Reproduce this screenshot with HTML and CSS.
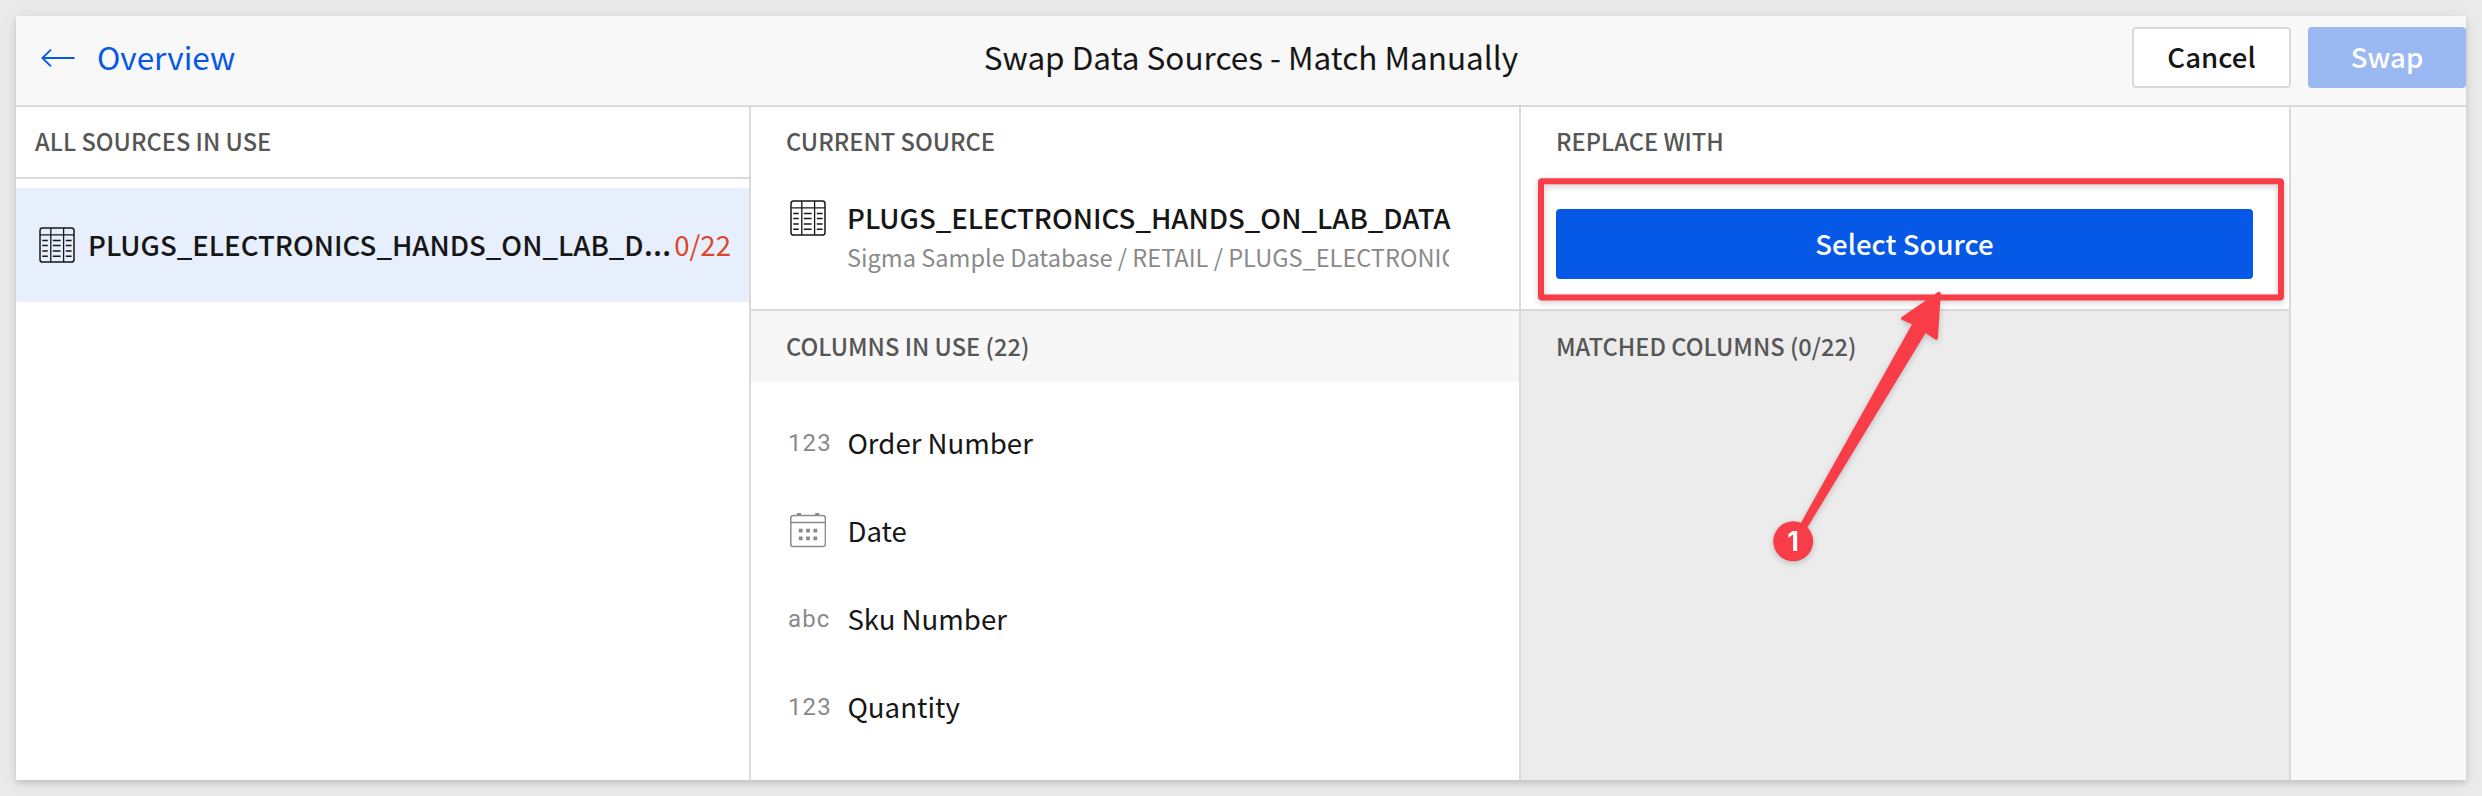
FILE: index.html
```html
<!DOCTYPE html>
<html lang="en">
<head>
<meta charset="utf-8">
<title>Swap Data Sources</title>
<link rel="stylesheet" href="styles.css">
</head>
<body>
<svg class="defs" aria-hidden="true">
  <symbol id="table" viewBox="0 0 36 36">
    <rect x="1" y="1" width="34" height="34" rx="2.6" stroke-width="1.5"/>
    <path d="M1 7.8H35M11.8 1V35M24.6 1V35" stroke-width="1.3"/>
    <path d="M3.3 13.4H8.8M13.8 13.4H21.6M26.8 13.4H32.6M3.3 18.6H8.8M13.8 18.6H21.6M26.8 18.6H32.6M3.3 24H8.8M13.8 24H21.6M26.8 24H32.6M3.3 29.3H8.8M13.8 29.3H21.6M26.8 29.3H32.6" stroke-width="1.5"/>
  </symbol>
</svg>
<main class="panel">
  <header class="topbar">
    <a class="back">
      <svg class="back-arrow" viewBox="0 0 34 20"><path d="M1.4 10H33.5M10 1.6L1.4 10L10 18.4"/></svg>
      <span>Overview</span>
    </a>
    <h1 class="title">Swap Data Sources - Match Manually</h1>
    <div class="actions">
      <button class="btn btn-cancel">Cancel</button>
      <button class="btn btn-swap">Swap</button>
    </div>
  </header>
  <div class="columns">
    <section class="col sources">
      <h2 class="heading ruled">ALL SOURCES IN USE</h2>
      <div class="source-row">
        <svg class="table-icon"><use href="#table"/></svg>
        <span class="source-name">PLUGS_ELECTRONICS_HANDS_ON_LAB_D<span class="ellipsis">…</span></span>
        <span class="count">0/22</span>
      </div>
    </section>
    <section class="col current">
      <div class="upper">
        <h2 class="heading">CURRENT SOURCE</h2>
        <div class="source-card">
          <svg class="table-icon"><use href="#table"/></svg>
          <div class="source-text">
            <div class="source-title">PLUGS_ELECTRONICS_HANDS_ON_LAB_DATA</div>
            <div class="source-path">Sigma Sample Database / RETAIL / PLUGS_ELECTRONIC</div>
          </div>
        </div>
      </div>
      <h2 class="heading lower shaded">COLUMNS IN USE (22)</h2>
      <ul class="fields">
        <li><span class="type">123</span><span>Order Number</span></li>
        <li><span class="type"><svg class="calendar" viewBox="0 0 36 36"><rect x=".8" y="3.5" width="34.6" height="31" rx="2.6"/><path d="M1 10.6H35"/><path class="solid" d="M7 1h4v3h-4zM25.2 1h4v3h-4zM8.8 16.8h3.8v3.8h-3.8zM16.1 16.8h3.8v3.8h-3.8zM23.4 16.8h3.8v3.8h-3.8zM8.8 24.4h3.8v3.8h-3.8zM16.1 24.4h3.8v3.8h-3.8zM23.4 24.4h3.8v3.8h-3.8z"/></svg></span><span>Date</span></li>
        <li><span class="type">abc</span><span>Sku Number</span></li>
        <li><span class="type">123</span><span>Quantity</span></li>
      </ul>
    </section>
    <section class="col replace">
      <div class="upper">
        <h2 class="heading">REPLACE WITH</h2>
        <button class="select-source">Select Source</button>
      </div>
      <h2 class="heading lower">MATCHED COLUMNS (0/22)</h2>
    </section>
  </div>
</main>
<svg class="annotation" viewBox="0 0 2482 796">
  <rect x="1541" y="181.2" width="740" height="116.3" rx="1"/>
  <path d="M1939 293.5L1902.8 318.4L1914.5 323.3L1802.8 523L1806.2 526L1925 330.6L1936.2 338Z"/>
  <circle cx="1793.2" cy="541.3" r="20"/>
  <text x="1793" y="550.5">1</text>
</svg>
</body>
</html>
```
FILE: styles.css
```css
* { box-sizing: border-box; }

body {
  margin: 0;
  height: 796px;
  padding: 16px;
  overflow: hidden;
  background: #eaeaea;
  color: #161616;
  font: 400 27.6px/40px "Noto Sans CJK SC", "Noto Sans", sans-serif;
}

h1, h2, ul { margin: 0; padding: 0; font-weight: 400; }
button { font: inherit; }
.defs { position: absolute; width: 0; height: 0; }

.panel {
  display: flex;
  flex-direction: column;
  width: 2450px;
  height: 764px;
  background: #f8f8f8;
  box-shadow: 0 3px 6px rgba(0, 0, 0, .14), 0 2px 18px rgba(0, 0, 0, .06);
}

/* Top bar */
.topbar {
  display: grid;
  grid-template-columns: 967.7px auto 1fr;
  align-items: start;
  height: 91px;
  border-bottom: 2px solid #dadada;
}
.back, .title { margin-top: 16px; font-size: 31.5px; line-height: 48px; }
.back { display: flex; align-items: center; gap: 22px; padding-left: 25px; color: #0658e6; }
.back-arrow { width: 34px; height: 20px; margin-top: 4px; fill: none; stroke: #0658e6; stroke-width: 1.9; }
.actions { display: flex; justify-content: flex-end; gap: 17px; margin-top: 11px; }
.btn { height: 61px; border: 2px solid #dadada; border-radius: 4px; padding: 0 0 3px; font-weight: 500; }
.btn-cancel { width: 159px; background: #fff; color: #161616; }
.btn-swap { width: 158px; border-color: #9ab8f1; background: #9ab8f1; color: #fff; }

/* Columns */
.columns { display: flex; flex: 1; }
.col { border-right: 2px solid #dadada; background: #fff; }
.sources { width: 735px; }
.current, .replace { width: 770px; }
.replace { background: #ececec; }

.heading {
  height: 71px;
  padding-left: 35px;
  color: #565656;
  font-size: 23.65px;
  font-weight: 500;
  line-height: 69px;
}
.ruled { height: 72px; padding-left: 19px; border-bottom: 2px solid #dadada; }
.lower { line-height: 71px; }
.shaded { background: #f7f7f7; }
.upper { height: 204px; border-bottom: 2px solid #dadada; background: #fff; }

.table-icon { flex: none; width: 36px; height: 36px; fill: none; stroke: #161616; }

.source-row {
  display: flex;
  align-items: center;
  height: 114px;
  margin-top: 9px;
  padding: 0 18px 0 23px;
  background: #e7eefc;
}
.source-name { margin: -2px 0 0 13px; font-weight: 500; white-space: nowrap; }
.ellipsis { font: 500 34px/0 "Noto Sans", sans-serif; }
.count { margin: -2px 0 0 auto; color: #da472b; }

.source-card { display: flex; padding: 22px 70px 0 39px; }
.source-text { min-width: 0; margin-left: 21px; }
.source-title { margin-top: -3px; font-weight: 500; white-space: nowrap; }
.source-path { overflow: hidden; color: #8a8a8a; font-size: 23.6px; white-space: nowrap; }

.fields { padding-top: 16px; list-style: none; }
.fields li { display: flex; height: 88px; padding: 0 0 0 37px; line-height: 88px; }
.type { width: 59.4px; color: #8a8a8a; font: 400 24px/90px Roboto, sans-serif; letter-spacing: 1.1px; }
.calendar { display: block; width: 36px; height: 36px; margin: 26px 0 0 2px; fill: none; stroke: #8a8a8a; stroke-width: 1.5; }
.calendar .solid { fill: #8a8a8a; stroke: none; }

.select-source {
  display: block;
  width: 697px;
  height: 70px;
  margin: 31px 0 0 35px;
  border: 0;
  border-radius: 4px;
  padding: 0 0 3px;
  background: #0658e6;
  color: #fff;
  font-weight: 500;
}

/* Step marker drawn over the page */
.annotation {
  position: absolute;
  top: 0;
  left: 0;
  width: 2482px;
  height: 796px;
  filter: drop-shadow(0 2px 3px rgba(0, 0, 0, .2));
  pointer-events: none;
}
.annotation rect { fill: none; stroke: #f83c48; stroke-width: 6; stroke-linejoin: round; }
.annotation path { fill: #f83c48; stroke: #f83c48; stroke-width: 3.5; stroke-linejoin: round; }
.annotation circle { fill: #f83c48; }
.annotation text { fill: #fff; font: 700 27px Inter, sans-serif; text-anchor: middle; }
```
